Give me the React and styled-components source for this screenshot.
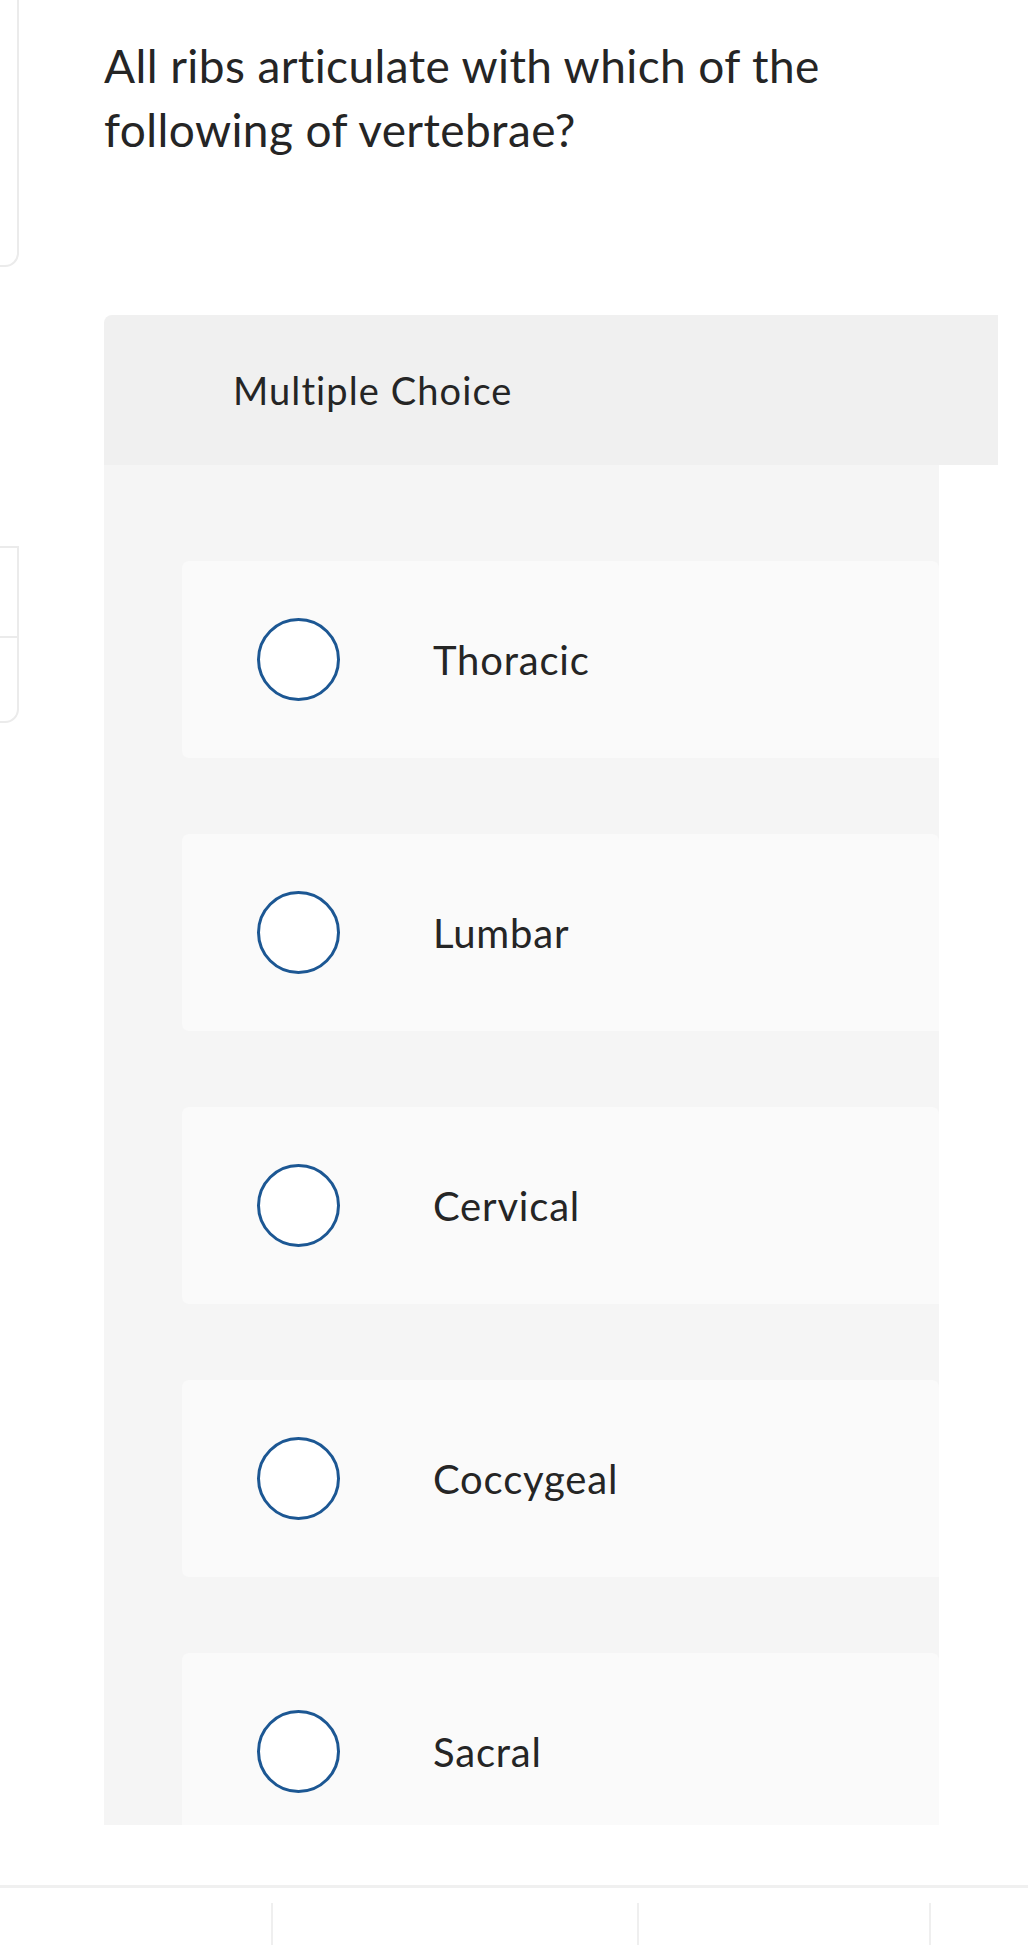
import React from 'react';
import styled, { createGlobalStyle } from 'styled-components';

const GlobalStyle = createGlobalStyle`
  html, body {
    margin: 0;
    padding: 0;
    background: #ffffff;
  }
  body {
    font-family: Lato, "Open Sans", sans-serif;
    font-variant-ligatures: none;
    color: #222222;
  }
`;

const Page = styled.div`
  width: 1028px;
  height: 1945px;
  overflow: hidden;
  display: flex;
  flex-direction: column;
`;

const TopArea = styled.div`
  display: flex;
  align-items: flex-start;
`;

const Sidebar = styled.div`
  width: 19px;
  flex-shrink: 0;
  overflow: hidden;
  display: flex;
  flex-direction: column;
`;

const StubCard = styled.div`
  width: 60px;
  box-sizing: border-box;
  margin-left: -41px;
  margin-top: ${(p) => p.$top}px;
  border: 2px solid #ebebeb;
  border-radius: 0 0 14px 0;
  background: #ffffff;
`;

const StubRow = styled.div`
  height: ${(p) => p.$height}px;
  & + & {
    border-top: 2px solid #ebebeb;
  }
`;

const Main = styled.div`
  margin-left: 85px;
  display: flex;
  flex-direction: column;
`;

const Question = styled.h1`
  margin: 34px 0 0;
  font-size: 46px;
  font-weight: 400;
  line-height: 64px;
  letter-spacing: 0.4px;
  color: #252525;
  width: 780px;
`;

const Panel = styled.section`
  margin-top: 153px;
  display: flex;
  flex-direction: column;
`;

const PanelHeader = styled.div`
  width: 894px;
  height: 150px;
  box-sizing: border-box;
  padding-left: 129px;
  display: flex;
  align-items: center;
  background: #f0f0f0;
  border-radius: 8px 0 0 0;
  font-size: 38px;
  letter-spacing: 1.1px;
  color: #252525;
`;

const PanelBody = styled.div`
  width: 835px;
  height: 1360px;
  box-sizing: border-box;
  padding: 96px 0 0 78px;
  background: #f5f5f5;
  overflow: hidden;
  display: flex;
  flex-direction: column;
  gap: 76px;
`;

const OptionCard = styled.label`
  flex-shrink: 0;
  height: 197px;
  box-sizing: border-box;
  padding-left: 75px;
  display: flex;
  align-items: center;
  background: #fafafa;
  border-radius: 7px 7px 0 7px;
  cursor: pointer;
`;

const Radio = styled.span`
  width: 83px;
  height: 83px;
  box-sizing: border-box;
  flex-shrink: 0;
  border: 3px solid #1c5793;
  border-radius: 50%;
  background: #ffffff;
`;

const OptionText = styled.span`
  margin-left: 93px;
  font-size: 40px;
  letter-spacing: 0.8px;
  color: #252525;
`;

const Footer = styled.div`
  margin-top: 60px;
  border-top: 3px solid #f0f0f0;
  display: flex;
  flex: 1;
`;

const FooterCell = styled.div`
  width: ${(p) => p.$width}px;
  margin-top: 15px;
  flex-shrink: 0;
  & + & {
    border-left: 2px solid #efefef;
  }
`;

const options = ['Thoracic', 'Lumbar', 'Cervical', 'Coccygeal', 'Sacral'];

export default function App() {
  return (
    <Page>
      <GlobalStyle />
      <TopArea>
        <Sidebar>
          <StubCard $top={-20}>
            <StubRow $height={283} />
          </StubCard>
          <StubCard $top={279}>
            <StubRow $height={88} />
            <StubRow $height={83} />
          </StubCard>
        </Sidebar>
        <Main>
          <Question>All ribs articulate with which of the following of vertebrae?</Question>
          <Panel>
            <PanelHeader>Multiple Choice</PanelHeader>
            <PanelBody>
              {options.map((opt) => (
                <OptionCard key={opt}>
                  <Radio />
                  <OptionText>{opt}</OptionText>
                </OptionCard>
              ))}
            </PanelBody>
          </Panel>
        </Main>
      </TopArea>
      <Footer>
        <FooterCell $width={271} />
        <FooterCell $width={364} />
        <FooterCell $width={290} />
        <FooterCell $width={103} />
      </Footer>
    </Page>
  );
}
